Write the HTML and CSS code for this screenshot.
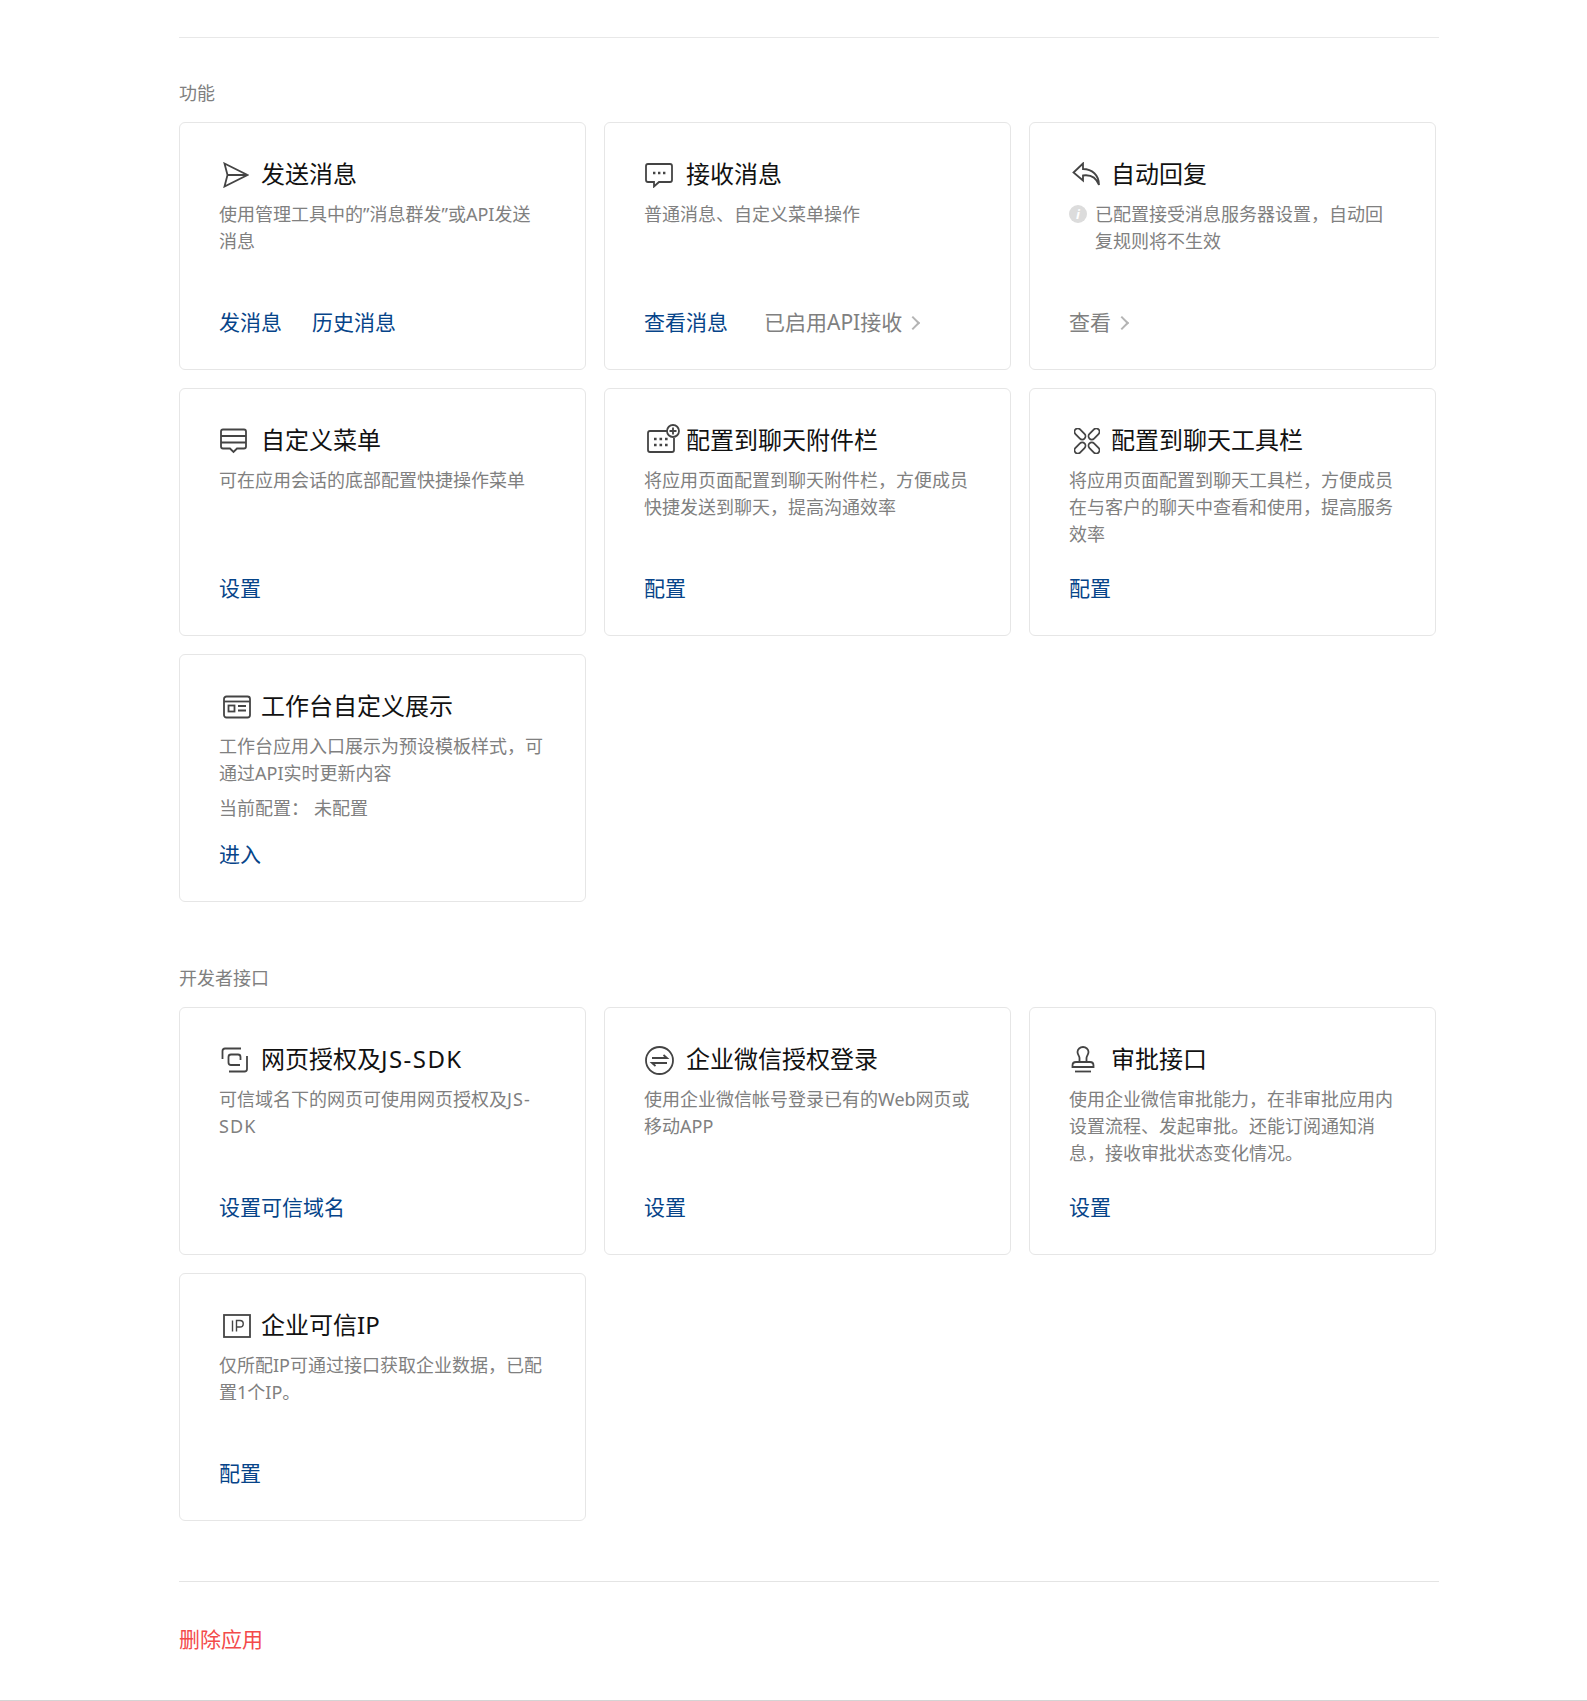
FILE: index.html
```html
<!DOCTYPE html>
<html lang="zh-CN">
<head>
    <meta charset="UTF-8">
    <title>应用详情</title>
    <link rel="stylesheet" href="styles.css">
</head>
<body>
    <div class="page">
        <!-- 功能 -->
        <section class="section first">
            <h3 class="section-title">功能</h3>
            <div class="card-grid">
                <div class="card">
                    <h4 class="card-title">
                        <span class="card-icon icon-send">
                            <svg width="26" height="26" viewBox="0 0 26 26"><path d="M1.500 1.500 L24.500 13 L1.500 24.500 L4.500 13 Z M4.500 13 H24.500" /></svg>
                        </span>发送消息</h4>
                    <p class="card-desc">使用管理工具中的”消息群发”或API发送消息</p>
                    <div class="card-links">
                        <a class="link">发消息</a>
                        <a class="link">历史消息</a>
                    </div>
                </div>
                <div class="card">
                    <h4 class="card-title">
                        <span class="card-icon">
                            <svg width="30" height="26" viewBox="0 0 30 26"><path d="M4 2 H26 Q28 2 28 4 V18 Q28 20 26 20 H15 L10 24.500 V20 H4 Q2 20 2 18 V4 Q2 2 4 2 Z" /><path class="dots" d="M9 11 h2.400 M14 11 h2.400 M19 11 h2.400" /></svg>
                        </span>接收消息</h4>
                    <p class="card-desc">普通消息、自定义菜单操作</p>
                    <div class="card-links">
                        <a class="link wide">查看消息</a>
                        <a class="link muted">已启用API接收<span class="chevron"></span></a>
                    </div>
                </div>
                <div class="card">
                    <h4 class="card-title">
                        <span class="card-icon icon-reply">
                            <svg width="28" height="26" viewBox="0 0 28 26"><path d="M11 1.500 L1.500 10.500 L11 18.500 V13.500 C18 12.500 24 15 27 23 C27 13 20 7 11 7 Z" /></svg>
                        </span>自动回复</h4>
                    <p class="card-desc with-tip"><span class="tip-icon">i</span>已配置接受消息服务器设置，自动回复规则将不生效</p>
                    <div class="card-links">
                        <a class="link muted">查看<span class="chevron"></span></a>
                    </div>
                </div>
                <div class="card">
                    <h4 class="card-title">
                        <span class="card-icon icon-menu">
                            <svg width="27" height="26" viewBox="0 0 27 26"><path d="M3 1.500 H24 Q26 1.500 26 3.500 V18.500 Q26 20.500 24 20.500 H17 L13.500 24 L10 20.500 H3 Q1 20.500 1 18.500 V3.500 Q1 1.500 3 1.500 Z M1 8 H26 M1 14.500 H26" /></svg>
                        </span>自定义菜单</h4>
                    <p class="card-desc">可在应用会话的底部配置快捷操作菜单</p>
                    <div class="card-links">
                        <a class="link">设置</a>
                    </div>
                </div>
                <div class="card">
                    <h4 class="card-title">
                        <span class="card-icon icon-attach">
                            <svg width="33" height="29" viewBox="0 0 33 29"><path d="M20 7 H3 Q1 7 1 9 V26 Q1 28 3 28 H25 Q27 28 27 26 V14" /><path class="dots" d="M7 15 h2.600 M12.500 15 h2.600 M18 15 h2.600 M7 21 h2.600 M12.500 21 h2.600 M18 21 h2.600" /><circle cx="26" cy="7" r="6" /><path d="M26 3.500 V10.500 M22.500 7 H29.500" /></svg>
                        </span>配置到聊天附件栏</h4>
                    <p class="card-desc">将应用页面配置到聊天附件栏，方便成员快捷发送到聊天，提高沟通效率</p>
                    <div class="card-links">
                        <a class="link">配置</a>
                    </div>
                </div>
                <div class="card">
                    <h4 class="card-title">
                        <span class="card-icon icon-tools">
                            <svg width="26" height="26" viewBox="0 0 26 26"><g transform="rotate(45 13 13)"><rect x="9.750" y="-3.300" width="6.500" height="12.800" rx="3.250" /><rect x="9.750" y="16.500" width="6.500" height="12.800" rx="3.250" /><rect x="-3.300" y="9.750" width="12.800" height="6.500" rx="3.250" /><rect x="16.500" y="9.750" width="12.800" height="6.500" rx="3.250" /></g></svg>
                        </span>配置到聊天工具栏</h4>
                    <p class="card-desc">将应用页面配置到聊天工具栏，方便成员在与客户的聊天中查看和使用，提高服务效率</p>
                    <div class="card-links">
                        <a class="link">配置</a>
                    </div>
                </div>
                <div class="card">
                    <h4 class="card-title">
                        <span class="card-icon icon-send">
                            <svg width="28" height="24" viewBox="0 0 28 24"><rect x="1" y="1.500" width="26" height="21" rx="2.500" /><path d="M1 6.500 H27" /><rect x="5.500" y="10.500" width="6" height="6" /><path d="M15 11 H23 M15 15.500 H23" /></svg>
                        </span>工作台自定义展示</h4>
                    <p class="card-desc">工作台应用入口展示为预设模板样式，可通过API实时更新内容</p>
                    <p class="card-desc card-meta">当前配置：<span class="meta-value">未配置</span></p>
                    <div class="card-links">
                        <a class="link">进入</a>
                    </div>
                </div>
            </div>
        </section>

        <!-- 开发者接口 -->
        <section class="section">
            <h3 class="section-title">开发者接口</h3>
            <div class="card-grid">
                <div class="card">
                    <h4 class="card-title">
                        <span class="card-icon icon-web">
                            <svg width="27" height="26" viewBox="0 0 27 26"><path d="M1.500 12 V4 Q1.500 1.500 4 1.500 H20" /><path d="M19 18 H10 Q7.500 18 7.500 15.500 V10 Q7.500 7.500 10 7.500 H17 Q19.500 7.500 19.500 10 V13" /><path d="M26 9 V22 Q26 24.500 23.500 24.500 H8" /></svg>
                        </span>网页授权及<span class="latin">JS-SDK</span></h4>
                    <p class="card-desc">可信域名下的网页可使用网页授权及<span class="latin">JS-</span><span class="latin">SDK</span></p>
                    <div class="card-links">
                        <a class="link">设置可信域名</a>
                    </div>
                </div>
                <div class="card">
                    <h4 class="card-title">
                        <span class="card-icon icon-login">
                            <svg width="29" height="29" viewBox="0 0 29 29"><circle cx="14.500" cy="14.500" r="13.500" /><path d="M7 12 H22 L18.500 9 M22 17 H7 L10.500 20" /></svg>
                        </span>企业微信授权登录</h4>
                    <p class="card-desc">使用企业微信帐号登录已有的Web网页或移动APP</p>
                    <div class="card-links">
                        <a class="link">设置</a>
                    </div>
                </div>
                <div class="card">
                    <h4 class="card-title">
                        <span class="card-icon icon-stamp">
                            <svg width="24" height="28" viewBox="0 0 24 28"><path d="M8.500 16 V12 C8.500 10 6.500 8.500 6.500 6 A5.500 5 0 0 1 17.500 6 C17.500 8.500 15.500 10 15.500 12 V16" /><path d="M5 16 H19 Q22.500 16 22.500 19.500 V21 H1.500 V19.500 Q1.500 16 5 16 Z" /><path d="M4 25.500 H20" /></svg>
                        </span>审批接口</h4>
                    <p class="card-desc">使用企业微信审批能力，在非审批应用内设置流程、发起审批。还能订阅通知消息，接收审批状态变化情况。</p>
                    <div class="card-links">
                        <a class="link">设置</a>
                    </div>
                </div>
                <div class="card">
                    <h4 class="card-title">
                        <span class="card-icon icon-ip">
                            <svg width="28" height="24" viewBox="0 0 28 24"><rect x="1" y="1" width="26" height="22" /><path class="ip" d="M9.500 6.500 V17.500 M13.500 17.500 V6.500 H17 A3 3 0 0 1 17 13 H13.500" /></svg>
                        </span>企业可信IP</h4>
                    <p class="card-desc">仅所配IP可通过接口获取企业数据，已配置1个IP。</p>
                    <div class="card-links">
                        <a class="link">配置</a>
                    </div>
                </div>
            </div>
        </section>

        <div class="page-footer">
            <a class="danger-link">删除应用</a>
        </div>
    </div>
</body>
</html>
```

FILE: styles.css
```css
body {
    margin: 0;
    padding: 0;
    font-family: "Noto Sans", "Noto Sans CJK SC", sans-serif;
    background-color: #fff;
    color: #808080;
}

.page {
    box-sizing: border-box;
    height: 1701px;
    padding: 37px 148px 0 179px;
    border-bottom: 1px solid #d4d4d4;
}

.section {
    margin-top: 63px;
}

.section.first {
    margin-top: 0;
    padding-top: 42px;
    border-top: 1px solid #e8e8e8;
}

.section-title {
    margin: 0 0 15px;
    font-size: 18px;
    font-weight: normal;
    line-height: 27px;
    color: #808080;
}

.card-grid {
    display: grid;
    grid-template-columns: repeat(3, 407px);
    grid-auto-rows: 248px;
    gap: 18px;
}

.card {
    box-sizing: border-box;
    display: flex;
    flex-direction: column;
    padding: 34px 39px 32px;
    border: 1px solid #e6e6e6;
    border-radius: 6px;
}

.card-title {
    display: flex;
    align-items: center;
    margin: 0 0 10px;
    font-size: 24px;
    font-weight: normal;
    line-height: 34px;
    color: #111;
}

.card-icon {
    display: flex;
    flex: none;
    box-sizing: border-box;
    width: 42px;
    margin-top: 2px;
}

.card-icon svg {
    fill: none;
    stroke: #444;
    stroke-width: 1.8;
}

.icon-send {
    padding-left: 4px;
}

.icon-reply {
    padding-left: 3px;
}

.icon-menu {
    padding-left: 1px;
}

.icon-attach {
    margin-top: -3px;
    padding-left: 3px;
}

.icon-tools {
    padding-left: 5px;
}

.icon-web {
    padding-left: 2px;
}

.icon-login {
    padding-left: 1px;
}

.icon-stamp {
    padding-left: 2px;
}

.icon-ip {
    padding-left: 4px;
}

.card-icon .dots {
    stroke-width: 2.4;
}

.card-icon .ip {
    stroke-width: 1.4;
}

.latin {
    letter-spacing: 0.06em;
}

.card-desc {
    margin: 0;
    font-size: 18px;
    line-height: 27px;
    color: #808080;
}

.card-desc.with-tip {
    position: relative;
    padding-left: 26px;
}

.tip-icon {
    position: absolute;
    left: 0;
    top: 4px;
    width: 18px;
    height: 18px;
    border-radius: 50%;
    background-color: #dcdcdc;
    color: #fff;
    font-size: 13px;
    font-style: italic;
    font-weight: bold;
    line-height: 18px;
    text-align: center;
}

.card-meta {
    margin-top: 8px;
}

.meta-value {
    margin-left: 5px;
}

.card-links {
    display: flex;
    gap: 30px;
    margin-top: auto;
    font-size: 21px;
    line-height: 30px;
}

.link {
    color: #064489;
    cursor: pointer;
}

.link.wide {
    margin-right: 6px;
}

.link.muted {
    color: #808080;
}

.chevron {
    display: inline-block;
    width: 8px;
    height: 8px;
    margin-left: 6px;
    border-top: 2px solid #b4b4b4;
    border-right: 2px solid #b4b4b4;
    transform: rotate(45deg);
    vertical-align: 2px;
}

.page-footer {
    margin-top: 60px;
    padding-top: 42px;
    border-top: 1px solid #e4e4e4;
    font-size: 21px;
    line-height: 30px;
}

.danger-link {
    color: #f34a4a;
    cursor: pointer;
}
```
